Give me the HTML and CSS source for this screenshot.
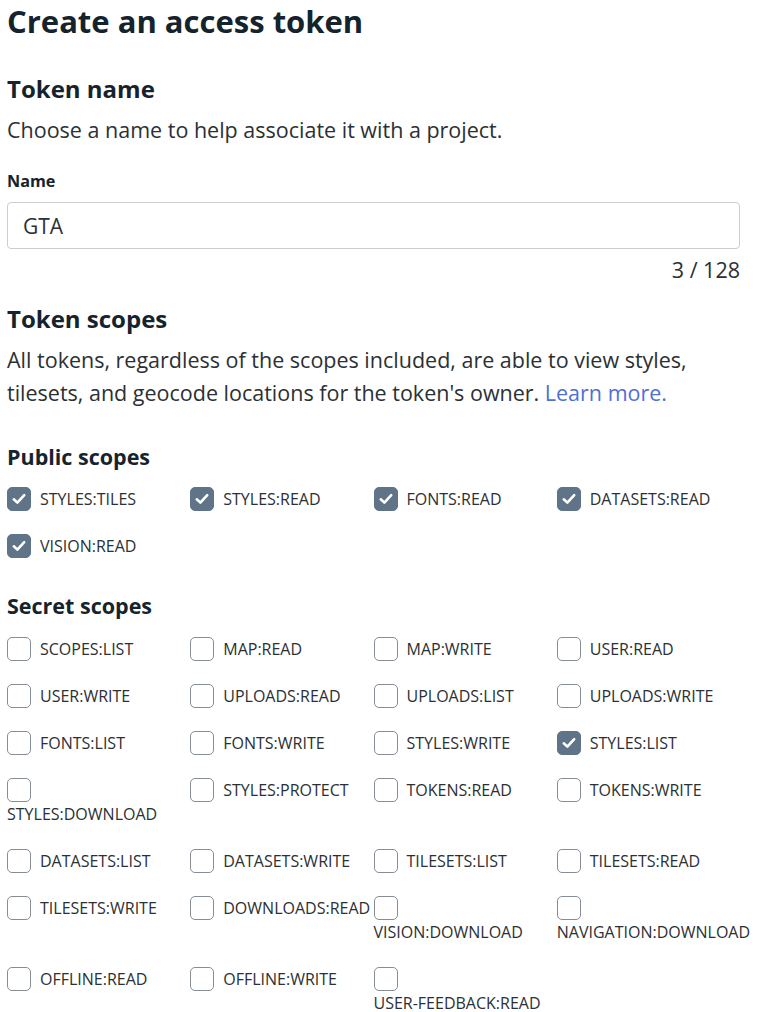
FILE: index.html
```html
<!DOCTYPE html>
<html lang="en">
<head>
    <meta charset="UTF-8">
    <meta name="viewport" content="width=device-width, initial-scale=1.0">
    <title>Create an access token</title>
    <link rel="stylesheet" href="styles.css">
</head>
<body>

    <h1 class="title">Create an access token</h1>

    <h2 class="section-title first">Token name</h2>
    <p class="lead">Choose a name to help associate it with a project.</p>

    <label class="field-label" for="name">Name</label>
    <input class="field-input" type="text" id="name" value="GTA">
    <div class="counter">3 / 128</div>

    <h2 class="section-title">Token scopes</h2>
    <p class="desc">All tokens, regardless of the scopes included, are able to view styles, tilesets, and geocode locations for the token's owner. <a href="#">Learn more.</a></p>

    <h3 class="group-title">Public scopes</h3>
    <div class="scopes public">
        <label class="scope"><span class="box checked"></span>STYLES:TILES</label>
        <label class="scope"><span class="box checked"></span>STYLES:READ</label>
        <label class="scope"><span class="box checked"></span>FONTS:READ</label>
        <label class="scope"><span class="box checked"></span>DATASETS:READ</label>
        <label class="scope"><span class="box checked"></span>VISION:READ</label>
    </div>

    <h3 class="group-title secret">Secret scopes</h3>
    <div class="scopes">
        <label class="scope"><span class="box"></span>SCOPES:LIST</label>
        <label class="scope"><span class="box"></span>MAP:READ</label>
        <label class="scope"><span class="box"></span>MAP:WRITE</label>
        <label class="scope"><span class="box"></span>USER:READ</label>

        <label class="scope"><span class="box"></span>USER:WRITE</label>
        <label class="scope"><span class="box"></span>UPLOADS:READ</label>
        <label class="scope"><span class="box"></span>UPLOADS:LIST</label>
        <label class="scope"><span class="box"></span>UPLOADS:WRITE</label>

        <label class="scope"><span class="box"></span>FONTS:LIST</label>
        <label class="scope"><span class="box"></span>FONTS:WRITE</label>
        <label class="scope"><span class="box"></span>STYLES:WRITE</label>
        <label class="scope"><span class="box checked"></span>STYLES:LIST</label>

        <label class="scope stacked"><span class="box"></span><span class="text">STYLES:DOWNLOAD</span></label>
        <label class="scope"><span class="box"></span>STYLES:PROTECT</label>
        <label class="scope"><span class="box"></span>TOKENS:READ</label>
        <label class="scope"><span class="box"></span>TOKENS:WRITE</label>

        <label class="scope"><span class="box"></span>DATASETS:LIST</label>
        <label class="scope"><span class="box"></span>DATASETS:WRITE</label>
        <label class="scope"><span class="box"></span>TILESETS:LIST</label>
        <label class="scope"><span class="box"></span>TILESETS:READ</label>

        <label class="scope"><span class="box"></span>TILESETS:WRITE</label>
        <label class="scope"><span class="box"></span>DOWNLOADS:READ</label>
        <label class="scope stacked"><span class="box"></span><span class="text">VISION:DOWNLOAD</span></label>
        <label class="scope stacked"><span class="box"></span><span class="text">NAVIGATION:DOWNLOAD</span></label>

        <label class="scope"><span class="box"></span>OFFLINE:READ</label>
        <label class="scope"><span class="box"></span>OFFLINE:WRITE</label>
        <label class="scope stacked"><span class="box"></span><span class="text">USER-FEEDBACK:READ</span></label>
    </div>

</body>
</html>
```

FILE: styles.css
```css
body {
    margin: 0;
    padding: 0 28px 0 7px;
    font-family: "Open Sans", "Liberation Sans", sans-serif;
    color: #2b3034;
    background-color: #fff;
}
.title {
    margin: 0;
    font-size: 31px;
    line-height: 42px;
    font-weight: 700;
    color: #15232d;
}
.section-title {
    margin: 20px 0 0;
    font-size: 24px;
    line-height: 30px;
    font-weight: 700;
    color: #15232d;
}
.section-title.first {
    margin-top: 32px;
}
.lead {
    margin: 10px 0 0;
    font-size: 21.5px;
    line-height: 32px;
}
.field-label {
    display: block;
    margin-top: 25px;
    font-size: 16.2px;
    line-height: 20px;
    font-weight: 700;
    color: #15232d;
}
.field-input {
    display: block;
    box-sizing: border-box;
    width: 100%;
    height: 47px;
    margin-top: 11px;
    padding: 0 15px;
    border: 1px solid #c9cfd3;
    border-radius: 4px;
    font-family: inherit;
    font-size: 21px;
    color: #2b3034;
}
.counter {
    margin-top: 7px;
    text-align: right;
    font-size: 21.5px;
    line-height: 28px;
}
.desc {
    margin: 9px 0 0;
    font-size: 21.5px;
    line-height: 33px;
}
.desc a {
    color: #4f6fd6;
    text-decoration: none;
}
.group-title {
    margin: 33px 0 0;
    font-size: 21.5px;
    line-height: 30px;
    font-weight: 700;
    color: #15232d;
}
.group-title.secret {
    margin-top: 33px;
}
.scopes {
    display: grid;
    grid-template-columns: repeat(4, minmax(0, 1fr));
    align-items: start;
    row-gap: 23px;
    margin-top: 16px;
}
.scopes.public {
    margin-top: 15px;
}
.scope {
    display: flex;
    align-items: center;
    flex-wrap: wrap;
    font-size: 16px;
    line-height: 24px;
    color: #2b3034;
    white-space: nowrap;
}
.scope.stacked .text {
    flex-basis: 100%;
}
.box {
    box-sizing: border-box;
    width: 24px;
    height: 24px;
    margin-right: 9px;
    border: 1.5px solid #868d94;
    border-radius: 5px;
    background-color: #fff;
}
.box.checked {
    border-color: #5f7489;
    background-color: #5f7489;
    background-image: url("data:image/svg+xml,%3Csvg xmlns='http://www.w3.org/2000/svg' viewBox='0 0 24 24'%3E%3Cpath d='M6.3 12.3l3.9 3.7 7.5-8.2' fill='none' stroke='white' stroke-width='2.8' stroke-linecap='round' stroke-linejoin='round'/%3E%3C/svg%3E");
    background-size: 100% 100%;
}
```
